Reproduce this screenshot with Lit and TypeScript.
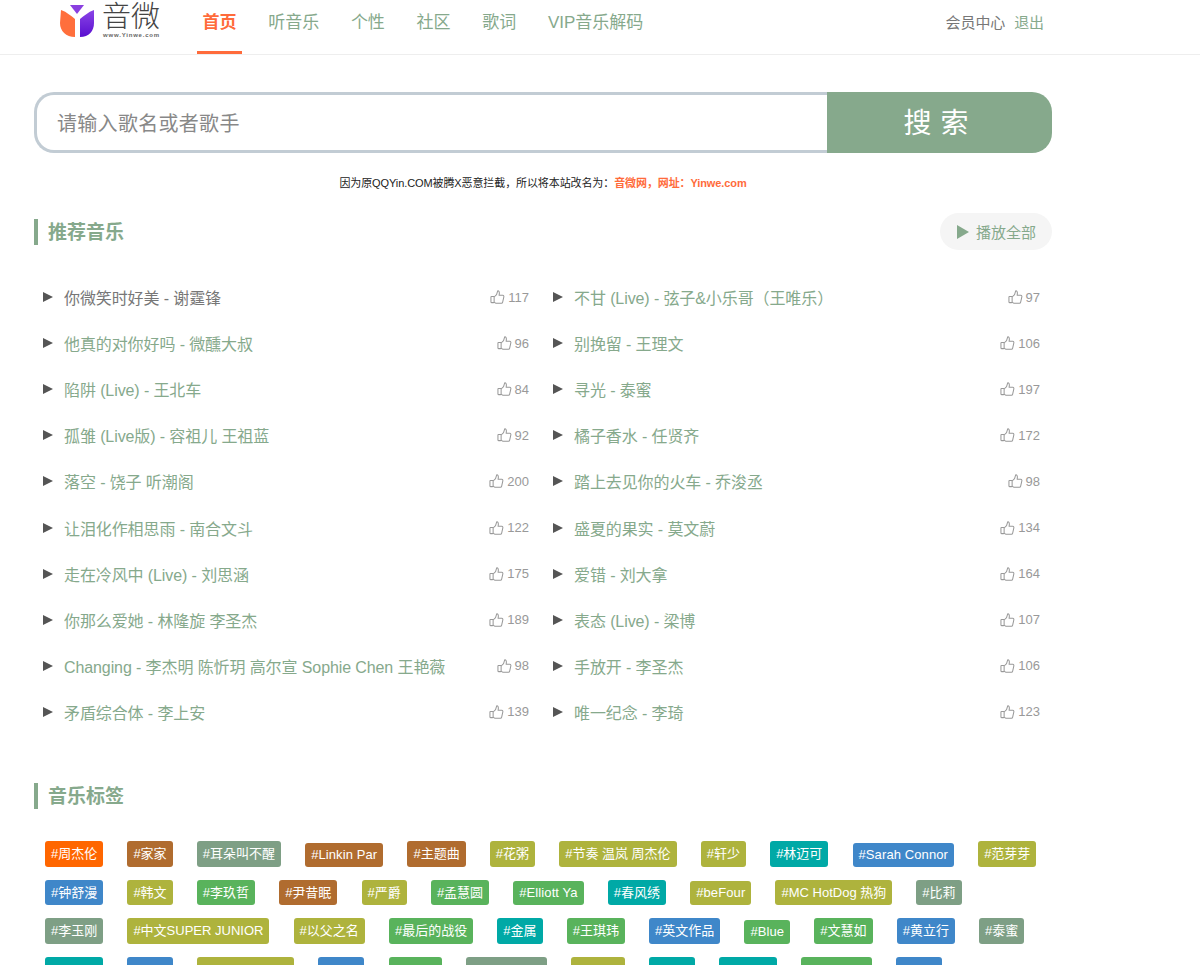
import { LitElement, html, css, svg } from "lit";
import { customElement } from "lit/decorators.js";

const LEFT: [string, number][] = [
  ["你微笑时好美 - 谢霆锋", 117], ["他真的对你好吗 - 微醺大叔", 96], ["陷阱 (Live) - 王北车", 84],
  ["孤雏 (Live版) - 容祖儿 王祖蓝", 92], ["落空 - 饶子 听潮阁", 200], ["让泪化作相思雨 - 南合文斗", 122],
  ["走在冷风中 (Live) - 刘思涵", 175], ["你那么爱她 - 林隆旋 李圣杰", 189],
  ["Changing - 李杰明 陈忻玥 高尔宣 Sophie Chen 王艳薇", 98], ["矛盾综合体 - 李上安", 139],
];
const RIGHT: [string, number][] = [
  ["不甘 (Live) - 弦子&小乐哥（王唯乐）", 97], ["别挽留 - 王理文", 106], ["寻光 - 泰蜜", 197],
  ["橘子香水 - 任贤齐", 172], ["踏上去见你的火车 - 乔浚丞", 98], ["盛夏的果实 - 莫文蔚", 134],
  ["爱错 - 刘大拿", 164], ["表态 (Live) - 梁博", 107], ["手放开 - 李圣杰", 106], ["唯一纪念 - 李琦", 123],
];
type Tag = [string, string, boolean?];
const TAGS: Tag[][] = [
  [["#周杰伦", "orange"], ["#家家", "brown"], ["#耳朵叫不醒", "sage"], ["#Linkin Par", "brown", true], ["#主题曲", "brown"], ["#花粥", "olive"], ["#节奏 温岚 周杰伦", "olive"], ["#轩少", "olive"], ["#林迈可", "teal"], ["#Sarah Connor", "blue", true], ["#范芽芽", "olive"]],
  [["#钟舒漫", "blue"], ["#韩文", "olive"], ["#李玖哲", "green"], ["#尹昔眠", "brown"], ["#严爵", "olive"], ["#孟慧圆", "green"], ["#Elliott Ya", "green", true], ["#春风绣", "teal"], ["#beFour", "olive", true], ["#MC HotDog 热狗", "olive"], ["#比莉", "sage"]],
  [["#李玉刚", "sage"], ["#中文SUPER JUNIOR", "olive"], ["#以父之名", "olive"], ["#最后的战役", "green"], ["#金属", "teal"], ["#王琪玮", "green"], ["#英文作品", "blue"], ["#Blue", "green", true], ["#文慧如", "green"], ["#黄立行", "blue"], ["#泰蜜", "sage"]],
];
const CUT: [number, string][] = [[58, "teal"], [46, "blue"], [97, "olive"], [46, "blue"], [53, "green"], [81, "sage"], [54, "olive"], [46, "teal"], [58, "teal"], [71, "green"], [46, "blue"]];

const thumb = svg`<svg class="thumb" viewBox="0 0 16 16" width="15" height="16" fill="none" stroke="#999" stroke-width="1.1" stroke-linejoin="round"><rect x="1" y="7.5" width="3.4" height="6.5" rx=".6"/><path d="M4.4 8 L7 5.4 L8.2 1.4 C9.8 1.4 10.4 3 9.7 6.2 H13.6 C14.7 6.2 15 7.2 14.7 8.2 L13.5 13.4 C13.3 14.3 12.8 14.6 12.2 14.6 H6 L4.4 13.6"/></svg>`;

@customElement("app-root")
export class AppRoot extends LitElement {
  static styles = css`
    :host { display: block; height: 965px; overflow: hidden; background: #fff; color: #666;
      font-family: "Liberation Sans", "Noto Sans CJK SC", sans-serif; }
    header { height: 54px; border-bottom: 1px solid #eee; display: flex; align-items: stretch; }
    .logo { margin-left: 60px; width: 137px; display: flex; gap: 8px; align-items: flex-start; }
    .logo svg { margin-top: 5px; flex: none; }
    .brand { display: flex; flex-direction: column; color: #444; }
    .brand b { font-weight: 300; font-size: 29px; line-height: 32px; margin: 1px 0 -1px -1px; white-space: nowrap; }
    .brand small { font-size: 6px; font-weight: 700; letter-spacing: .8px; line-height: 7px; white-space: nowrap; color: #666; }
    nav { display: flex; gap: 20.7px; }
    nav a { padding: 0 5.5px; font-size: 17px; line-height: 46px; color: #86a98c; height: 54px; box-sizing: border-box; }
    nav a.on { color: #ff6b3b; font-weight: 700; border-bottom: 3px solid #ff6b3b; }
    .user { margin-left: auto; margin-right: 156px; display: flex; gap: 9px; font-size: 15px; line-height: 45px; letter-spacing: -.1px; color: #777; }
    .user span:last-child { color: #86a98c; }
    main { padding-left: 34px; }
    .search { margin-top: 37px; width: 1018px; height: 61px; display: flex; }
    .box { flex: 1; box-sizing: border-box; border: 3px solid #c2ccd4; border-right: 0; border-radius: 20px 0 0 20px;
      padding-left: 20px; font-size: 20px; line-height: 58px; color: #888; letter-spacing: .3px; }
    .btn { width: 225px; background: #86a98c; color: #fff; border-radius: 0 20px 20px 0; text-align: center;
      font-size: 28px; line-height: 63px; letter-spacing: 9px; padding-left: 2px; box-sizing: border-box; }
    .note { width: 1018px; text-align: center; font-size: 11px; line-height: 22px; height: 20px; margin-top: 19px; color: #222; white-space: nowrap; letter-spacing: -.1px; }
    .note b { color: #ff6b3b; }
    .head { display: flex; justify-content: space-between; align-items: center; width: 1018px; }
    .title { border-left: 4px solid #86a98c; padding-left: 10px; font-size: 19px; font-weight: 700; height: 26px; line-height: 28px; color: #86a98c; }
    .h1 { margin-top: 21px; height: 37px; }
    .all { width: 112px; height: 37px; box-sizing: border-box; border-radius: 19px; background: #f5f5f5; color: #86a98c; font-size: 15px;
      display: flex; align-items: center; gap: 7px; padding-left: 17px; white-space: nowrap; }
    .all i { width: 0; height: 0; border-left: 12px solid #86a98c; border-top: 7px solid transparent; border-bottom: 7px solid transparent; }
    .list { display: grid; grid-template-columns: 510px 510px; margin-top: 25px; }
    .row { height: 46.1px; display: flex; align-items: center; padding: 0 15px 0 9px; }
    .col2 .row { padding-right: 14px; }
    .row i { flex: none; width: 0; height: 0; border-left: 10px solid #555; border-top: 5.5px solid transparent; border-bottom: 5.5px solid transparent; margin: -2px 11px 0 0; }
    .name { flex: 1; font-size: 16px; color: #86a98c; white-space: nowrap; overflow: hidden; letter-spacing: -.1px; margin-top: -2px; }
    .name.cur { color: #777; }
    .like { display: flex; align-items: center; gap: 3px; font-size: 13px; color: #999; margin-top: -2px; }
    .thumb { display: block; }
    .h2 { margin-top: 47px; }
    .tags { margin: 32px 0 0 11px; display: flex; flex-direction: column; gap: 12.7px; }
    .trow { display: flex; gap: 24.15px; align-items: flex-end; }
    .tag { height: 26.3px; box-sizing: border-box; padding: 0 6px; border-radius: 3px; color: #fff; font-size: 13px; line-height: 26px; white-space: nowrap; }
    .trow.short .tag { height: 25.3px; line-height: 25px; }
    .tag.lat, .trow.short .tag.lat { height: 24.3px; line-height: 24px; letter-spacing: .1px; }
    .orange { background: #ff6600; } .brown { background: #b06c2f; } .sage { background: #7e9f85; }
    .olive { background: #aeb33d; } .teal { background: #00a9a6; } .blue { background: #3f87c9; } .green { background: #59b35c; }
  `;

  private col(rows: [string, number][], cls: string, first: boolean) {
    return html`<div class=${cls}>${rows.map(([n, c], i) => html`
      <div class="row"><i></i><span class="name ${first && i === 0 ? "cur" : ""}">${n}</span><span class="like">${thumb}${c}</span></div>`)}</div>`;
  }

  render() {
    return html`
      <header>
        <div class="logo">
          <svg width="35" height="33" viewBox="0 0 35 33">
            <defs><linearGradient id="p" x1="0" y1="0" x2="0" y2="1"><stop offset="0" stop-color="#8a45e6"/><stop offset="1" stop-color="#5a0fd0"/></linearGradient></defs>
            <path d="M1 5 C7 7 11 11 15 14 V32 C6 32 0 26 0 18 Z" fill="#ff6f3c"/>
            <path d="M34 5 C28 7 24 11 20 14 V32 C29 32 34 26 34 18 Z" fill="url(#p)"/>
            <path d="M10 0 H24 L17 9 Z" fill="#8a3fe0"/>
          </svg>
          <div class="brand"><b>音微</b><small>www.Yinwe.com</small></div>
        </div>
        <nav>
          <a class="on">首页</a><a>听音乐</a><a>个性</a><a>社区</a><a>歌词</a><a>VIP音乐解码</a>
        </nav>
        <div class="user"><span>会员中心</span><span>退出</span></div>
      </header>
      <main>
        <div class="search"><div class="box">请输入歌名或者歌手</div><div class="btn">搜索</div></div>
        <div class="note">因为原QQYin.COM被腾X恶意拦截，所以将本站改名为：<b>音微网，网址：Yinwe.com</b></div>
        <div class="head h1"><div class="title">推荐音乐</div><div class="all"><i></i>播放全部</div></div>
        <div class="list">${this.col(LEFT, "col1", true)}${this.col(RIGHT, "col2", false)}</div>
        <div class="head h2"><div class="title">音乐标签</div></div>
        <div class="tags">
          ${TAGS.map((r, i) => html`<div class="trow ${i === 1 ? "short" : ""}">${r.map(([t, c, l]) => html`<span class="tag ${c} ${l ? "lat" : ""}">${t}</span>`)}</div>`)}
          <div class="trow">${CUT.map(([w, c]) => html`<span class="tag ${c}" style="width:${w}px"></span>`)}</div>
        </div>
      </main>
    `;
  }
}
